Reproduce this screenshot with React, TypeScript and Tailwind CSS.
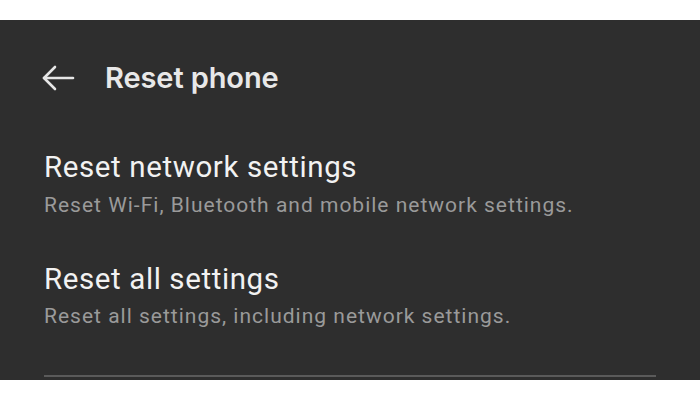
export default function App() {
  return (
    <div className="w-[700px] h-[400px] bg-white pt-[20px]">
      <div className="h-[360px] bg-[#2e2e2e] flex flex-col px-[44px] pt-[40px]">
        <div className="flex items-center h-[36px]">
          <svg width="34" height="26" viewBox="0 0 34 26" className="-ml-[3px]" fill="none" stroke="#e6e6e6" strokeWidth="2.6" strokeLinecap="round" strokeLinejoin="round">
            <path d="M32 13H3" />
            <path d="M14 2L3 13l11 11" />
          </svg>
          <span className="ml-[30px] text-[29px] leading-[36px] font-semibold text-[#e8e8e8] font-['Inter',sans-serif] tracking-[-0.1px]">Reset phone</span>
        </div>
        <div className="flex flex-col font-['Roboto',sans-serif] mt-[53px]">
          <div className="text-[29.5px] leading-[36px] tracking-[0.6px] text-[#f2f2f2]">Reset network settings</div>
          <div className="text-[21px] leading-[28px] mt-[6px] tracking-[1px] text-[#9a9a9a]">Reset Wi-Fi, Bluetooth and mobile network settings.</div>
        </div>
        <div className="flex flex-col font-['Roboto',sans-serif] mt-[42px]">
          <div className="text-[29.5px] leading-[36px] tracking-[0.6px] text-[#f2f2f2]">Reset all settings</div>
          <div className="text-[21px] leading-[28px] mt-[5px] tracking-[1px] text-[#9a9a9a]">Reset all settings, including network settings.</div>
        </div>
        <div className="mt-auto mb-[3px] h-[2px] bg-[#5a5a5a] w-[612px]" />
      </div>
    </div>
  );
}
